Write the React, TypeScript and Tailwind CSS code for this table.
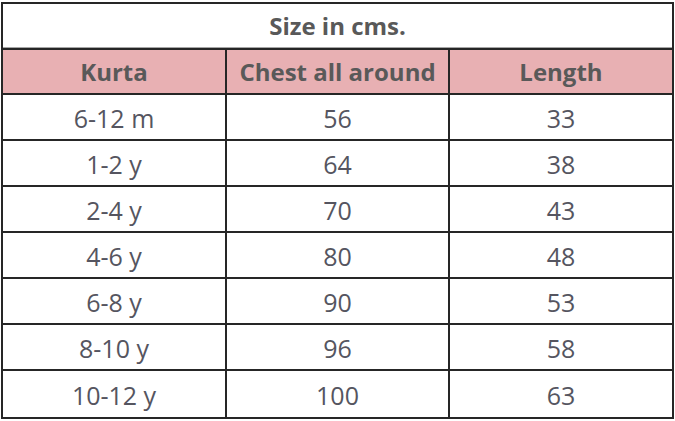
const rows: [string, string, string][] = [
  ['6-12 m', '56', '33'],
  ['1-2 y', '64', '38'],
  ['2-4 y', '70', '43'],
  ['4-6 y', '80', '48'],
  ['6-8 y', '90', '53'],
  ['8-10 y', '96', '58'],
  ['10-12 y', '100', '63'],
]

export default function App() {
  return (
    <div className="w-[675px] h-[421px] bg-white pt-[2px] pl-[1px] font-['Open_Sans',sans-serif] text-[#595959]">
      <div className="w-[673px] border-2 border-[#262626]">
        <div className="h-[44px] flex items-center justify-center border-b border-[#a6a6a6] text-[24px] font-bold leading-none">
          Size in cms.
        </div>
        <div className="grid grid-cols-[224px_223px_1fr] h-[47px] bg-[#e8b0b3] border-y-2 border-[#262626] text-[24px] font-bold leading-none">
          <div className="flex items-center justify-center border-r-2 border-[#262626]">Kurta</div>
          <div className="flex items-center justify-center border-r-2 border-[#262626]">Chest all around</div>
          <div className="flex items-center justify-center">Length</div>
        </div>
        {rows.map((r, i) => (
          <div
            key={r[0]}
            className={`grid grid-cols-[224px_223px_1fr] h-[46px] text-[25px] leading-none text-[#555560] ${i < rows.length - 1 ? 'border-b-2 border-[#262626]' : ''}`}
          >
            <div className="flex items-center justify-center pt-[3px] border-r-2 border-[#262626]">{r[0]}</div>
            <div className="flex items-center justify-center pt-[3px] border-r-2 border-[#262626]">{r[1]}</div>
            <div className="flex items-center justify-center pt-[3px]">{r[2]}</div>
          </div>
        ))}
      </div>
    </div>
  )
}
